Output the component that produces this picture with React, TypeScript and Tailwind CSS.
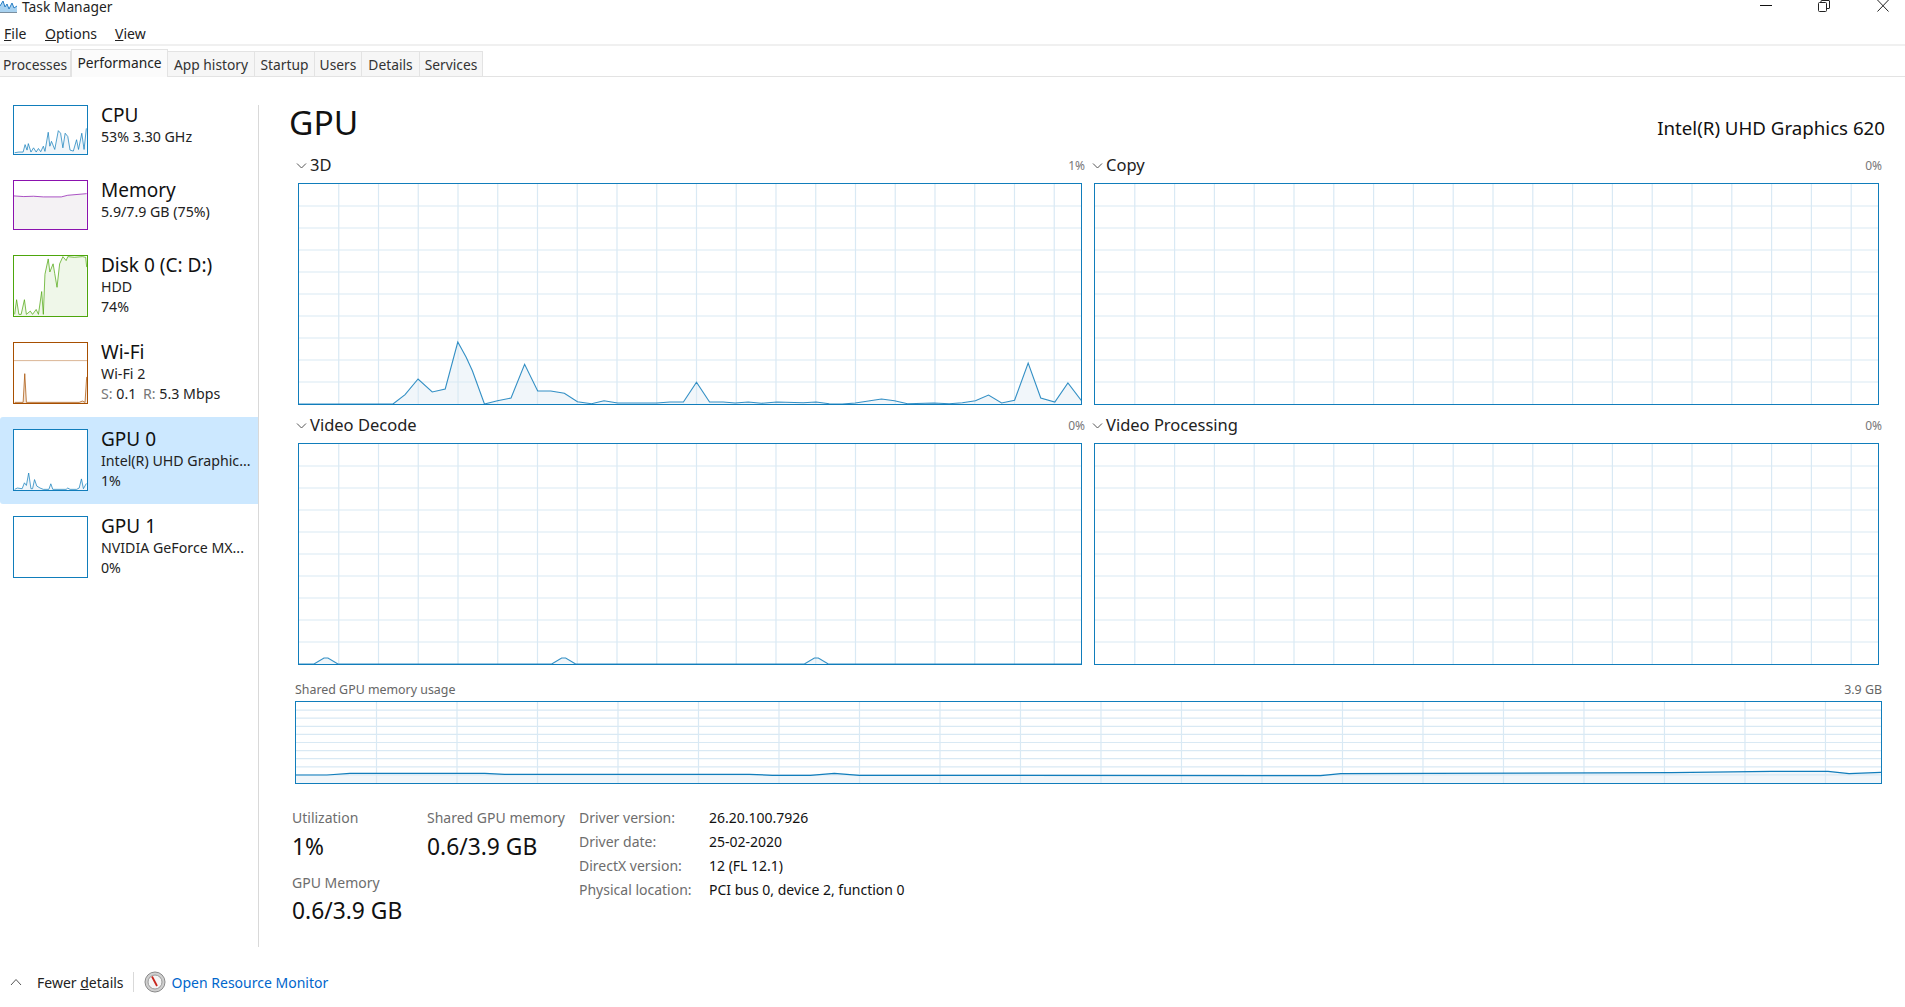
const tabs = [
  { name: 'Processes', w: 'w-[71px]' },
  { name: 'Performance', w: 'w-[97px]', active: true },
  { name: 'App history', w: 'w-[87px]' },
  { name: 'Startup', w: 'w-[60px]' },
  { name: 'Users', w: 'w-[47px]' },
  { name: 'Details', w: 'w-[58px]' },
  { name: 'Services', w: 'w-[63px]' },
];

type Pt = [number, number];

const toPoints = (pts: Pt[]) => pts.map((p) => `${p[0].toFixed(1)},${p[1].toFixed(1)}`).join(' ');

// thumbnails are traced at 3x so the viewBox is 3 times the box
const cpuLine: Pt[] = [[42, 460], [55, 458], [68, 458], [74, 435], [80, 452], [84, 432], [92, 458], [100, 445], [108, 458], [115, 447], [122, 457], [130, 440], [135, 456], [145, 397], [150, 440], [155, 425], [165, 450], [176, 392], [183, 400], [190, 445], [197, 400], [205, 410], [212, 452], [222, 455], [232, 420], [238, 450], [248, 400], [255, 450], [262, 385]];
const memLine: Pt[] = [[40, 587], [70, 589], [100, 588], [130, 590], [185, 590], [205, 585], [263, 580]];
const diskLine: Pt[] = [[42, 945], [48, 900], [55, 945], [62, 945], [72, 900], [78, 945], [90, 935], [97, 945], [108, 930], [115, 945], [125, 875], [130, 945], [135, 822], [145, 775], [150, 815], [160, 790], [165, 820], [172, 862], [180, 790], [190, 768], [200, 780], [205, 768], [225, 770], [250, 768], [260, 770], [263, 800]];
const wifiLine: Pt[] = [[42, 218], [68, 218], [73, 130], [78, 218], [240, 218], [250, 214], [258, 218], [263, 140]];
const gpu0Line: Pt[] = [[42, 480], [50, 476], [65, 478], [72, 460], [78, 468], [85, 430], [92, 478], [97, 478], [103, 450], [110, 470], [120, 476], [130, 480], [147, 480], [153, 463], [159, 480], [200, 480], [205, 476], [212, 480], [232, 480], [240, 476], [247, 448], [253, 478], [262, 462]];

const Thumb = ({ h, top, line, color, fill, extra }: { h: string; top: number; line?: Pt[]; color: string; fill?: string; extra?: number }) => {
  const height = h === 'h-[50px]' ? 148 : 184;
  const bottom = top + height;
  return (
    <div className={`w-[75px] ${h} border shrink-0 bg-white`} style={{ borderColor: color }}>
      <svg className="block w-full h-full" viewBox={`40 ${top} 224 ${height}`} preserveAspectRatio="none">
        {line && (
          <>
            <polygon points={toPoints([[line[0][0], bottom], ...line, [line[line.length - 1][0], bottom]])} fill={fill ?? '#f1f6fa'} />
            <polyline points={toPoints(line)} fill="none" stroke={color} strokeWidth="2.6" opacity="0.85" />
          </>
        )}
        {extra && <line x1="40" x2="264" y1={extra} y2={extra} stroke={color} strokeWidth="2.5" opacity="0.5" />}
      </svg>
    </div>
  );
};

const SideItem = ({ name, lines, thumb, selected }: { name: string; lines: React.ReactNode[]; thumb: React.ReactNode; selected?: boolean }) => (
  <div className={`flex py-[12.5px] pl-[13px] ${selected ? 'bg-[#cce8ff] rounded-l-[3px]' : ''}`}>
    {thumb}
    <div className="ml-[13px] -mt-[2px] whitespace-nowrap">
      <div className="text-[19px] leading-[24px] text-[#111]">{name}</div>
      {lines.map((l, i) => (
        <div key={i} className="text-[14.2px] leading-[20px] text-[#222]">
          {l}
        </div>
      ))}
    </div>
  </div>
);

const Chevron = ({ up }: { up?: boolean }) => (
  <svg width="12" height="8" viewBox="0 0 12 8" className="shrink-0">
    <polyline points={up ? '1,7 6,1.5 11,7' : '1,1.5 5.5,6 10,1.5'} fill="none" stroke="#555" strokeWidth="1" />
  </svg>
);

// vertical lines keep a fixed step from the left, so the last cell is a short one
const Grid = ({ w, h, step, rows }: { w: number; h: number; step: number; rows: number }) => (
  <g stroke="#d9e9f4" strokeWidth="1.2">
    {Array.from({ length: Math.floor(w / step) }, (_, i) => (
      <line key={i} x1={(i + 1) * step} x2={(i + 1) * step} y1="0" y2={h} />
    ))}
    {Array.from({ length: rows - 1 }, (_, i) => (
      <line key={i} x1="0" x2={w} y1={((i + 1) * h) / rows} y2={((i + 1) * h) / rows} />
    ))}
  </g>
);

const W = 783;
const H = 220;

// traced from the 3D chart crop, x scale 1.912, y scale 3
const raw3d: Pt[] = [[35, 310], [215, 310], [238, 282], [263, 235], [290, 274], [315, 265], [339, 124], [355, 170], [367, 210], [390, 310], [415, 300], [441, 292], [467, 191], [492, 271], [517, 271], [543, 278], [568, 303], [595, 309], [619, 300], [645, 307], [720, 307], [745, 304], [771, 304], [796, 245], [821, 304], [847, 304], [870, 307], [895, 304], [920, 308], [950, 304], [1000, 306], [1025, 304], [1050, 309], [1075, 310], [1100, 307], [1150, 295], [1175, 300], [1200, 309], [1250, 307], [1280, 309], [1305, 306], [1330, 300], [1355, 283], [1380, 307], [1405, 299], [1431, 187], [1455, 292], [1482, 304], [1507, 247], [1533, 300]];
const line3d: Pt[] = raw3d.map(([x, y]) => [(x - 35) / 1.912, H - (310 - y) / 3]);

const peaks = [27, 265, 518];
const lineDecode: Pt[] = [[0, H], ...peaks.flatMap((p): Pt[] => [[p - 12, H], [p - 2, H - 6], [p + 2, H - 6], [p + 12, H]]), [W, H]];

const Chart = ({ line }: { line?: Pt[] }) => (
  <div className="h-[222px] ml-[2px] mr-[3px] border border-[#117dbb] bg-white">
    <svg className="block w-full h-full" viewBox={`0 0 ${W} ${H}`} preserveAspectRatio="none">
      {line && <polygon points={toPoints([[0, H], ...line, [W, H]])} fill="#f1f6fa" />}
      <Grid w={W} h={H} step={39.8} rows={10} />
      {line && <polyline points={toPoints(line)} fill="none" stroke="#117dbb" strokeWidth="1.1" opacity="0.85" />}
    </svg>
  </div>
);

const Section = ({ title, pct, line }: { title: string; pct: string; line?: Pt[] }) => (
  <div>
    <div className="h-[28px] pb-[7px] flex items-center">
      <Chevron />
      <span className="ml-[2px] text-[16.5px] text-[#222]">{title}</span>
      <span className="ml-auto text-[12px] text-[#777]">{pct}</span>
    </div>
    <Chart line={line} />
  </div>
);

const rawMem: Pt[] = [[295, 775], [326, 775], [349, 773.3], [484, 773.3], [504, 774.3], [749, 774.3], [772, 775.3], [810, 775.3], [834, 773.3], [859, 775.3], [1321, 775.7], [1341, 773.7], [1672, 772.7], [1772, 771.3], [1829, 771.3], [1850, 773.7], [1882, 772.3]];
const lineMem: Pt[] = rawMem.map(([x, y]) => [x - 295, y - 702]);

const driverInfo = [
  ['Driver version:', '26.20.100.7926'],
  ['Driver date:', '25-02-2020'],
  ['DirectX version:', '12 (FL 12.1)'],
  ['Physical location:', 'PCI bus 0, device 2, function 0'],
];

export default function App() {
  return (
    <div className="w-[1905px] h-[1007px] bg-white flex flex-col overflow-hidden font-['Noto_Sans',sans-serif]">
      {/* title bar */}
      <div className="h-[22px] flex items-start shrink-0">
        <svg width="17" height="13" viewBox="0 0 17 13" className="shrink-0">
          <polygon points="0,12 0,6 3,1 5,7 7,4 9,9 12,3 14,8 17,6 17,12" fill="#a8d2f0" />
          <polyline points="0,6 3,1 5,7 7,4 9,9 12,3 14,8 17,6" fill="none" stroke="#2a7fc4" strokeWidth="1" />
          <line x1="0" x2="17" y1="12.5" y2="12.5" stroke="#7a8fa0" />
        </svg>
        <span className="ml-[5px] text-[13.8px] leading-[14px] text-[#222]">Task Manager</span>
        <div className="ml-auto flex items-start pr-[16px]">
          <svg width="12" height="12" viewBox="0 0 12 12" className="mr-[46px]">
            <line x1="0" x2="12" y1="5.5" y2="5.5" stroke="#111" />
          </svg>
          <svg width="12" height="12" viewBox="0 0 12 12" className="mr-[47px]">
            <rect x="0.5" y="2.5" width="8" height="9" rx="1" fill="none" stroke="#222" />
            <path d="M3 2.5 V1 a0.5 0.5 0 0 1 0.5 -0.5 H11 a0.5 0.5 0 0 1 0.5 0.5 V8 a0.5 0.5 0 0 1 -0.5 0.5 H9" fill="none" stroke="#222" />
          </svg>
          <svg width="12" height="12" viewBox="0 0 12 12">
            <path d="M0.5 0 L11.5 11.5 M11.5 0 L0.5 11.5" stroke="#222" strokeWidth="1" />
          </svg>
        </div>
      </div>

      {/* menu */}
      <div className="h-[24px] pt-[1px] shrink-0 flex items-start border-b-2 border-[#f0f0f0] pl-[4px] text-[14px] leading-[22px] text-[#222]">
        <span className="w-[41px]"><u>F</u>ile</span>
        <span className="w-[70px]"><u>O</u>ptions</span>
        <span><u>V</u>iew</span>
      </div>

      {/* tabs */}
      <div className="h-[31px] shrink-0 flex items-end border-b border-[#e3e3e3] text-[13.8px] text-[#333]">
        {tabs.map((t) =>
          t.active ? (
            <div key={t.name} className={`${t.w} h-[28px] -mb-px bg-[#fbfbfb] border-x border-t border-[#e3e3e3] flex items-start justify-center pt-[3px] text-[#222]`}>
              {t.name}
            </div>
          ) : (
            <div key={t.name} className={`${t.w} h-[25px] bg-[#f6f6f6] border-r border-t border-[#e3e3e3] flex items-center justify-center pt-[2px]`}>
              {t.name}
            </div>
          )
        )}
      </div>

      {/* body */}
      <div className="flex flex-1 min-h-0">
        <div className="w-[259px] shrink-0 mt-[28px] h-[842px] border-r border-[#d9d9d9]">
          <div className="-mt-[12.5px]">
            <SideItem name="CPU" lines={['53%  3.30 GHz']} thumb={<Thumb h="h-[50px]" top={316} line={cpuLine} color="#117dbb" />} />
            <SideItem name="Memory" lines={['5.9/7.9 GB (75%)']} thumb={<Thumb h="h-[50px]" top={541} line={memLine} color="#8b12ae" fill="#f4f2f4" />} />
            <SideItem name="Disk 0 (C: D:)" lines={['HDD', '74%']} thumb={<Thumb h="h-[62px]" top={766} line={diskLine} color="#4da60c" fill="#eff7e9" />} />
            <SideItem
              name="Wi-Fi"
              lines={['Wi-Fi 2', <><span className="text-[#777]">S:</span> 0.1 <span className="text-[#777] ml-[3px]">R:</span> 5.3 Mbps</>]}
              thumb={<Thumb h="h-[62px]" top={36} line={wifiLine} color="#a74f01" fill="#f3e6da" extra={90} />}
            />
            <SideItem selected name="GPU 0" lines={['Intel(R) UHD Graphic...', '1%']} thumb={<Thumb h="h-[62px]" top={298} line={gpu0Line} color="#117dbb" />} />
            <SideItem name="GPU 1" lines={['NVIDIA GeForce MX...', '0%']} thumb={<Thumb h="h-[62px]" top={559} color="#117dbb" />} />
          </div>
        </div>

        <div className="flex-1 min-w-0 pl-[30px] pr-[20px]">
          <div className="h-[78px] pt-[22px] flex justify-between items-start">
            <div className="text-[33.5px] leading-[46px] text-[#111]">GPU</div>
            <div className="mt-[15px] text-[18.7px] leading-[28px] text-[#111]">Intel(R) UHD Graphics 620</div>
          </div>

          <div className="ml-[7px] mr-[3px] grid grid-cols-[789px_790px] gap-x-[7px] gap-y-[10px]">
            <Section title="3D" pct="1%" line={line3d} />
            <Section title="Copy" pct="0%" />
            <Section title="Video Decode" pct="0%" line={lineDecode} />
            <Section title="Video Processing" pct="0%" />
          </div>

          <div className="mt-[15px] ml-[6px] mr-[3px]">
            <div className="h-[20px] flex items-center justify-between text-[12.4px] text-[#666]">
              <span>Shared GPU memory usage</span>
              <span>3.9 GB</span>
            </div>
            <div className="mt-[1px] h-[83px] border border-[#117dbb]">
              <svg className="block w-full h-full" viewBox="0 0 1587 81" preserveAspectRatio="none">
                <polygon points={toPoints([[0, 81], ...lineMem, [1587, 81]])} fill="#f1f6fa" />
                <Grid w={1587} h={81} step={80.6} rows={10} />
                <polyline points={toPoints(lineMem)} fill="none" stroke="#117dbb" strokeWidth="1.2" />
              </svg>
            </div>
          </div>

          <div className="mt-[23px] ml-[3px] flex">
            <div className="w-[135px] pt-[1px]">
              <div className="h-[20px] leading-[20px] text-[14px] text-[#6d6d6d]">Utilization</div>
              <div className="h-[38px] leading-[38px] text-[22.8px] text-[#111]">1%</div>
              <div className="mt-[7px] h-[20px] leading-[20px] text-[14px] text-[#6d6d6d]">GPU Memory</div>
              <div className="h-[36px] leading-[36px] text-[22.8px] text-[#111]">0.6/3.9 GB</div>
            </div>
            <div className="w-[152px] pt-[1px]">
              <div className="h-[20px] leading-[20px] text-[14px] text-[#6d6d6d]">Shared GPU memory</div>
              <div className="h-[38px] leading-[38px] text-[22.8px] text-[#111]">0.6/3.9 GB</div>
            </div>
            <div className="-mt-[2px] grid grid-cols-[130px_auto] auto-rows-[24px] items-center text-[14px]">
              {driverInfo.map(([k, v]) => (
                <div key={k} className="contents">
                  <span className="text-[#6d6d6d]">{k}</span>
                  <span className="text-[#111]">{v}</span>
                </div>
              ))}
            </div>
          </div>
        </div>
      </div>

      {/* footer */}
      <div className="h-[50px] shrink-0 flex items-center pl-[10px] text-[14px]">
        <Chevron up />
        <span className="ml-[15px] text-[#222]">Fewer <u>d</u>etails</span>
        <div className="ml-[9px] w-px h-[20px] bg-[#d9d9d9]" />
        <svg width="22" height="22" viewBox="0 0 22 22" className="ml-[10px] shrink-0">
          <circle cx="11" cy="11" r="10" fill="#cfcfcf" stroke="#8a8a8a" />
          <circle cx="11" cy="11" r="7" fill="#f5f5f5" stroke="#9a9a9a" />
          <line x1="8" y1="5.5" x2="13" y2="15" stroke="#c8251c" strokeWidth="1.8" />
        </svg>
        <span className="ml-[6px] text-[#0066cc]">Open Resource Monitor</span>
      </div>
    </div>
  );
}
